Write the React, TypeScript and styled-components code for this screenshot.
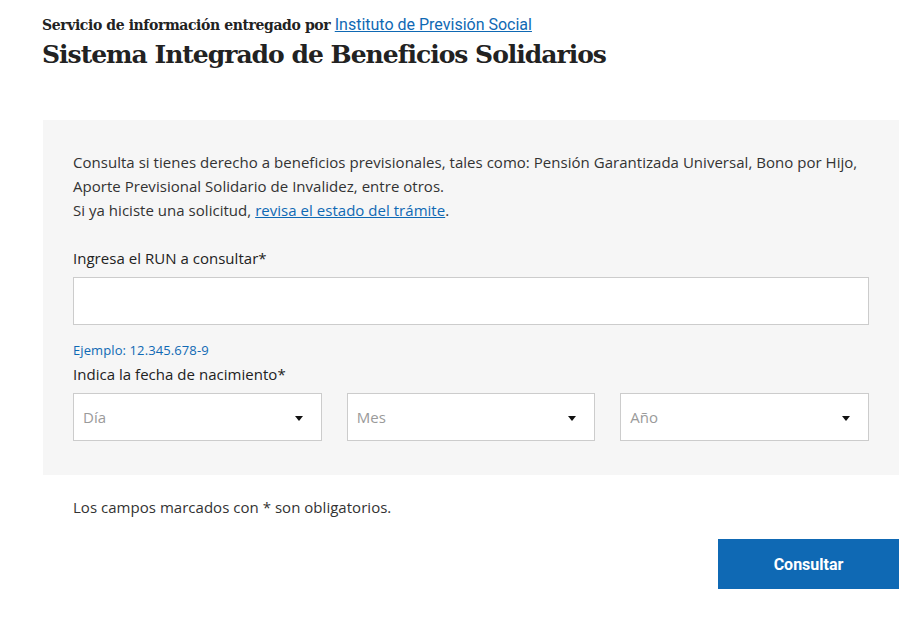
import styled, { createGlobalStyle } from "styled-components";

const GlobalStyle = createGlobalStyle`
  * { box-sizing: border-box; }
  body {
    margin: 0;
    background: #ffffff;
    font-family: "Open Sans", "Liberation Sans", sans-serif;
    color: #333333;
  }
`;

const Page = styled.div`
  width: 915px;
  padding: 14px 16px 0 42px;
`;

const Header = styled.header`
  margin-bottom: 47px;
`;

const Provider = styled.div`
  font-family: "DejaVu Serif", "Liberation Serif", serif;
  font-weight: 700;
  font-size: 14px;
  line-height: 22px;
  color: #222222;
  letter-spacing: -0.4px;
  a {
    font-family: Roboto, "Liberation Sans", sans-serif;
    font-weight: 400;
    font-size: 16px;
    letter-spacing: 0;
    color: #0f69b4;
  }
`;

const Title = styled.h1`
  margin: 0;
  font-family: "DejaVu Serif", "Liberation Serif", serif;
  font-weight: 700;
  font-size: 25px;
  line-height: 37px;
  color: #222222;
  letter-spacing: -1px;
`;

const Panel = styled.section`
  background: #f6f6f6;
  margin-left: 1px;
  padding: 30px 30px 34px 30px;
`;

const Intro = styled.p`
  margin: 0 0 24px 0;
  font-size: 15px;
  line-height: 24px;
  letter-spacing: 0.03px;
  color: #333333;
  a {
    color: #0f69b4;
  }
`;

const Label = styled.label`
  display: block;
  font-size: 15px;
  line-height: 24px;
  letter-spacing: 0.03px;
  color: #222222;
  margin-bottom: 7px;
`;

const TextInput = styled.input`
  display: block;
  width: 100%;
  height: 48px;
  margin-top: 1px;
  border: 1px solid #cccccc;
  background: #ffffff;
  outline: none;
`;

const Hint = styled.div`
  font-size: 13px;
  line-height: 20px;
  color: #0f69b4;
  letter-spacing: 0.1px;
  margin-top: 15px;
  margin-bottom: 2px;
`;

const SelectRow = styled.div`
  display: grid;
  grid-template-columns: repeat(3, 1fr);
  gap: 25px;
  margin-top: 1px;
`;

const SelectBox = styled.div`
  height: 48px;
  border: 1px solid #cccccc;
  background: #ffffff;
  display: flex;
  align-items: center;
  justify-content: space-between;
  padding: 0 18px 0 9px;
  font-size: 15px;
  letter-spacing: 0.03px;
  color: #9a9a9a;
`;

const Caret = styled.span`
  width: 0;
  height: 0;
  border-left: 4.5px solid transparent;
  border-right: 4.5px solid transparent;
  border-top: 5px solid #111111;
  margin-top: 2px;
`;

const Note = styled.p`
  margin: 20px 0 0 31px;
  font-size: 15px;
  line-height: 24px;
  letter-spacing: 0.03px;
  color: #333333;
`;

const Actions = styled.div`
  display: flex;
  justify-content: flex-end;
  margin-top: 20px;
`;

const Button = styled.button`
  width: 181px;
  height: 50px;
  border: none;
  background: #0f69b4;
  color: #ffffff;
  font-family: Roboto, "Liberation Sans", sans-serif;
  font-weight: 700;
  font-size: 16px;
  cursor: pointer;
`;

export default function App() {
  return (
    <>
      <GlobalStyle />
      <Page>
        <Header>
          <Provider>
            Servicio de información entregado por{" "}
            <a href="#">Instituto de Previsión Social</a>
          </Provider>
          <Title>Sistema Integrado de Beneficios Solidarios</Title>
        </Header>
        <Panel>
          <Intro>
            Consulta si tienes derecho a beneficios previsionales, tales como: Pensión
            Garantizada Universal, Bono por Hijo, Aporte Previsional Solidario de Invalidez,
            entre otros.
            <br />
            Si ya hiciste una solicitud, <a href="#">revisa el estado del trámite</a>.
          </Intro>
          <Label htmlFor="run">Ingresa el RUN a consultar*</Label>
          <TextInput id="run" type="text" />
          <Hint>Ejemplo: 12.345.678-9</Hint>
          <Label>Indica la fecha de nacimiento*</Label>
          <SelectRow>
            {["Día", "Mes", "Año"].map((p) => (
              <SelectBox key={p}>
                {p}
                <Caret />
              </SelectBox>
            ))}
          </SelectRow>
        </Panel>
        <Note>Los campos marcados con * son obligatorios.</Note>
        <Actions>
          <Button>Consultar</Button>
        </Actions>
      </Page>
    </>
  );
}
